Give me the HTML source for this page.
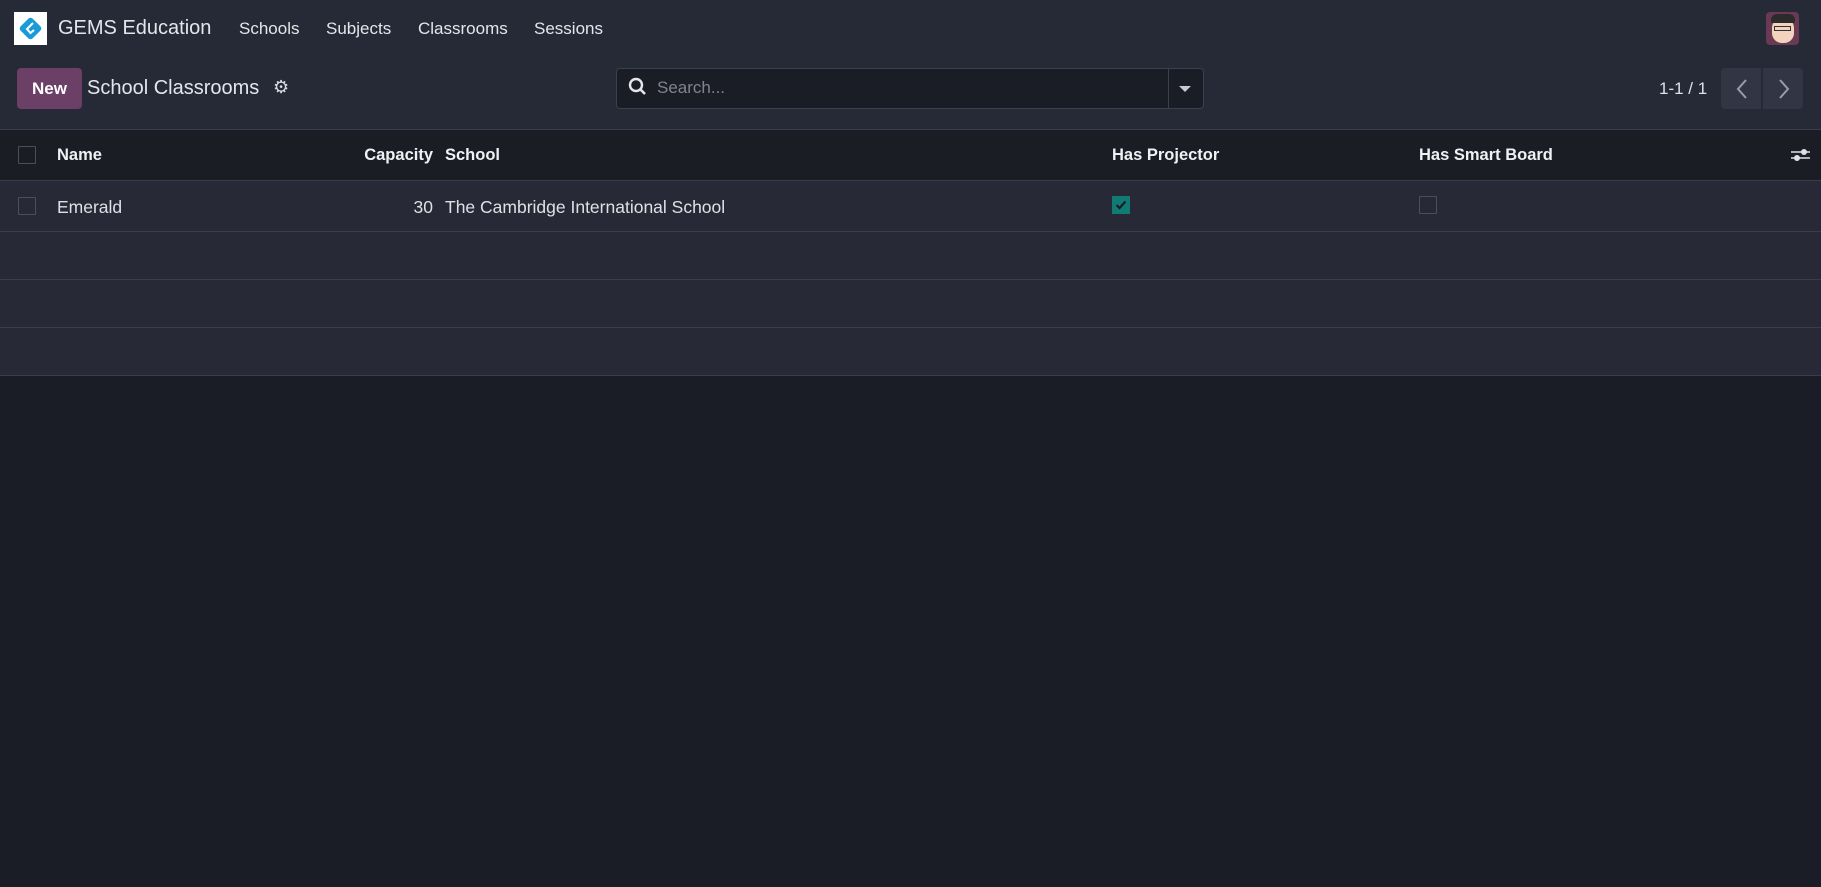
<!DOCTYPE html>
<html><head><meta charset="utf-8"><style>
*{box-sizing:border-box;margin:0;padding:0}
body{width:1821px;height:887px;background:#1b1d26;font-family:"Liberation Sans",sans-serif;color:#dee0e6;font-size:17.5px;overflow:hidden;position:relative}
.abs{position:absolute}
.top{position:absolute;left:0;top:0;width:1821px;height:129px;background:#262a36}
.nav{position:absolute;top:19px;font-size:17px;color:#e4e6eb}
.cb{position:absolute;width:18px;height:18px;border:1px solid #4b4f5c;border-radius:1px}
.th{position:absolute;top:146px;font-weight:bold;font-size:16.5px;color:#f0f1f4}
.line{position:absolute;left:0;width:1821px;height:1px;background:#3a3e4b}
</style></head><body>
<div class="top"></div>
<div class="abs" style="left:14px;top:12px;width:33px;height:33px;background:#fff"></div>
<svg class="abs" style="left:14px;top:12px" width="33" height="33" viewBox="0 0 33 33">
<rect x="8" y="8" width="17" height="17" rx="3" transform="rotate(45 16.5 16.5)" fill="#1a9bd8"/>
<path d="M19 11 L13 17 L16.5 21 L20 18" stroke="#fff" stroke-width="2" fill="none"/>
</svg>
<div class="nav" style="left:58px;top:17px;font-size:20px">GEMS Education</div>
<div class="nav" style="left:239px">Schools</div>
<div class="nav" style="left:326px">Subjects</div>
<div class="nav" style="left:418px">Classrooms</div>
<div class="nav" style="left:534px">Sessions</div>
<div class="abs" style="left:1766px;top:12px;width:33px;height:33px;border-radius:4px;background:#6a3a55;overflow:hidden">
<div class="abs" style="left:6px;top:6px;width:22px;height:25px;border-radius:10px;background:#f3d3bd"></div>
<div class="abs" style="left:5px;top:2px;width:24px;height:9px;border-radius:6px 6px 2px 2px;background:#2b2b2b"></div>
<div class="abs" style="left:8px;top:14px;width:17px;height:5px;border:1px solid #333"></div>
</div>
<div class="abs" style="left:17px;top:68px;width:65px;height:41px;background:#6b3f66;border-radius:4px;color:#fff;font-weight:bold;font-size:17px;text-align:center;line-height:41px">New</div>
<div class="abs" style="left:87px;top:77px;font-size:20px;color:#e4e6eb">School Classrooms</div>
<div class="abs" style="left:273px;top:77px;font-size:18px;color:#d8dae0">⚙</div>
<div class="abs" style="left:616px;top:68px;width:588px;height:41px;border:1px solid #3c404d;border-radius:4px;background:#1b1d26"></div>
<div class="abs" style="left:1168px;top:69px;width:1px;height:39px;background:#3c404d"></div>
<svg class="abs" style="left:628px;top:77px" width="20" height="20" viewBox="0 0 20 20"><circle cx="8" cy="8" r="6" stroke="#e4e6eb" stroke-width="2.4" fill="none"/><path d="M12.5 12.5 L17 17" stroke="#e4e6eb" stroke-width="2.6"/></svg>
<div class="abs" style="left:657px;top:78px;font-size:17px;color:#7f8391">Search...</div>
<svg class="abs" style="left:1179px;top:85px" width="12" height="8"><path d="M0 1 L12 1 L6 7Z" fill="#c8cad2"/></svg>
<div class="abs" style="left:1659px;top:79px;font-size:17px;color:#dee0e6">1-1 / 1</div>
<div class="abs" style="left:1721px;top:68px;width:40px;height:41px;background:#323644;border-radius:4px 0 0 4px"></div>
<div class="abs" style="left:1763px;top:68px;width:40px;height:41px;background:#323644;border-radius:0 4px 4px 0"></div>
<svg class="abs" style="left:1735px;top:78px" width="14" height="22"><path d="M11 2 L3 11 L11 20" stroke="#9a9da8" stroke-width="2" fill="none"/></svg>
<svg class="abs" style="left:1777px;top:78px" width="14" height="22"><path d="M3 2 L11 11 L3 20" stroke="#9a9da8" stroke-width="2" fill="none"/></svg>
<div class="line" style="top:129px"></div>
<div class="abs" style="left:0;top:130px;width:1821px;height:50px;background:#1b1d25"></div>
<div class="line" style="top:180px"></div>
<div class="abs" style="left:0;top:181px;width:1821px;height:194px;background:#272a36"></div>
<div class="line" style="top:231px"></div>
<div class="line" style="top:279px"></div>
<div class="line" style="top:327px"></div>
<div class="line" style="top:375px"></div>
<div class="cb" style="left:18px;top:146px"></div>
<div class="th" style="left:57px">Name</div>
<div class="th" style="left:323px;width:110px;text-align:right">Capacity</div>
<div class="th" style="left:445px">School</div>
<div class="th" style="left:1112px">Has Projector</div>
<div class="th" style="left:1419px">Has Smart Board</div>
<svg class="abs" style="left:1791px;top:147px" width="20" height="16"><path d="M0 5H19M0 11H19" stroke="#dfe1e6" stroke-width="1.5"/><circle cx="13" cy="5" r="3" fill="#dfe1e6"/><circle cx="6" cy="11" r="3" fill="#dfe1e6"/></svg>
<div class="cb" style="left:18px;top:197px"></div>
<div class="abs" style="left:57px;top:197px">Emerald</div>
<div class="abs" style="left:333px;top:197px;width:100px;text-align:right">30</div>
<div class="abs" style="left:445px;top:197px">The Cambridge International School</div>
<div class="abs" style="left:1112px;top:196px;width:18px;height:18px;background:#117a73"></div>
<svg class="abs" style="left:1115px;top:200px" width="12" height="10"><path d="M1.5 5 L4.5 8 L10.5 1.5" stroke="#1b1d26" stroke-width="2.2" fill="none"/></svg>
<div class="cb" style="left:1419px;top:196px"></div>
</body></html>
